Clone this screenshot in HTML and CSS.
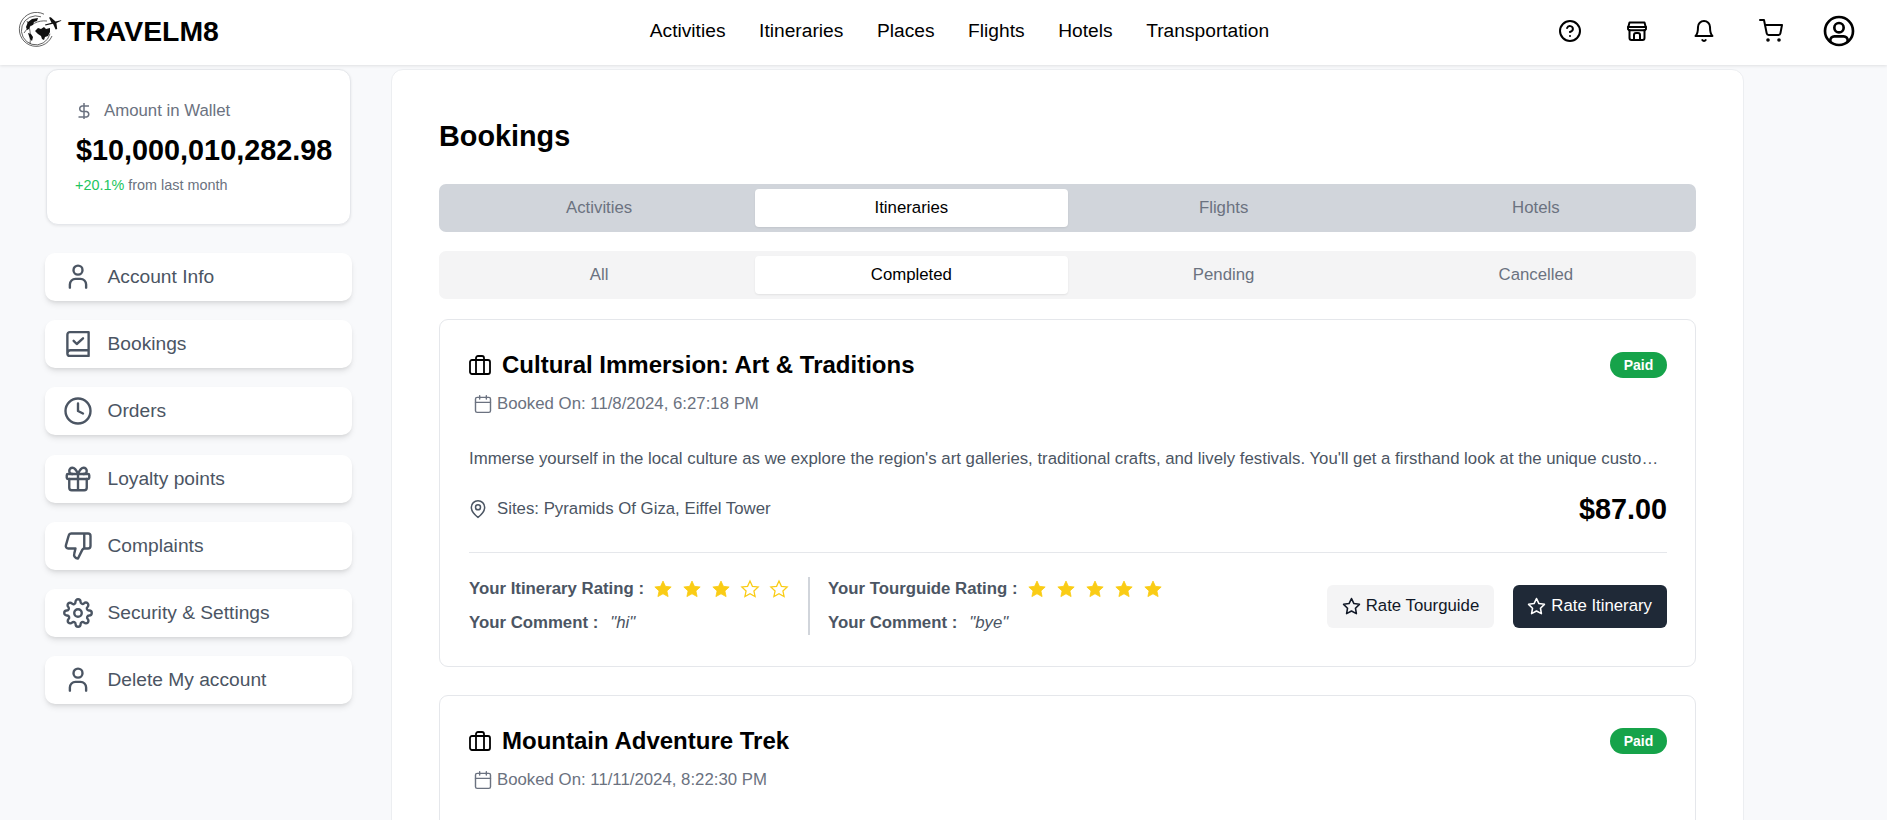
FILE: index.html
```html
<!DOCTYPE html>
<html lang="en">
<head>
    <meta charset="UTF-8">
    <meta name="viewport" content="width=device-width, initial-scale=1.0">
    <title>Bookings</title>
    <link rel="stylesheet" href="styles.css">
</head>
<body>
    <svg class="sprites" width="0" height="0">
        <symbol id="star" viewBox="0 0 24 24"><path d="M12 2.500l2.900 6.300 6.900.8-5.100 4.700 1.400 6.800-6.100-3.400-6.100 3.400 1.400-6.800-5.100-4.700 6.900-.8z"/></symbol>
        <symbol id="star-line" viewBox="0 0 24 24"><path d="M12 2l3.090 6.260L22 9.270l-5 4.870 1.180 6.880L12 17.770l-6.180 3.250L7 14.140 2 9.270l6.910-1.010z"/></symbol>
        <symbol id="user" viewBox="0 0 24 24"><circle cx="12" cy="6.500" r="3.600"/><path d="M5.500 20.500v-2.500a4.500 4.500 0 0 1 4.500-4.500h4a4.500 4.500 0 0 1 4.500 4.500v2.500"/></symbol>
        <symbol id="case" viewBox="0 0 24 24"><rect x="2" y="7" width="20" height="14" rx="2"/><path d="M8 21V5a2 2 0 0 1 2-2h4a2 2 0 0 1 2 2v16"/></symbol>
        <symbol id="calendar" viewBox="0 0 24 24"><rect x="3" y="4" width="18" height="18" rx="2"/><path d="M8 2v4M16 2v4M3 10h18"/></symbol>
    </svg>

    <header class="topbar">
        <a class="brand">
            <svg class="brand-logo" viewBox="0 0 44 38">
                <path class="logo-ring" d="M26 2.200A17 17 0 1 0 34 24"/>
                <path class="logo-ring" d="M23 4.800a14.500 14.500 0 1 0 9 17"/>
                <path class="logo-arc" d="M6 21C12 12 20 8 29 9M9 9c3 6 4 14 3 23"/>
                <path class="logo-land" d="M8 15l2-5 4-3 6-1-1 3-3 1-1 3-3 1-1 3-2 1zM17 19l3-3 3 1 3-2 2 2 4-1 0 4-2 4-3 1-1 3-2-1-1-3-3-2zM10 21l3 1 2 3-1 4-2-2z"/>
                <path class="logo-plane" d="M27 12.500l6.500-1.800L31 5.500l1.800-.3 4.700 4.400 5.500-1.400.4.6-5 2.200 .8 6-1.600.4-2.600-5.700-7.600 1.800z"/>
            </svg>
            <span class="brand-name">TRAVELM8</span>
        </a>
        <nav class="topnav">
            <a>Activities</a>
            <a>Itineraries</a>
            <a>Places</a>
            <a>Flights</a>
            <a>Hotels</a>
            <a>Transportation</a>
        </nav>
        <div class="topicons">
            <svg class="topicon" viewBox="0 0 24 24"><circle cx="12" cy="12" r="10"/><path d="M9.100 9a3 3 0 0 1 5.800 1c0 2-3 3-3 3M12 17h.01"/></svg>
            <svg class="topicon" viewBox="0 0 24 24"><path d="M3 9l1.500-5.500h15L21 9a2 2 0 0 1-1 2.200H4A2 2 0 0 1 3 9z"/><path d="M4.500 11v8a2 2 0 0 0 2 2h11a2 2 0 0 0 2-2v-8"/><path d="M9 21v-5a2 2 0 0 1 2-2h2a2 2 0 0 1 2 2v5"/><path d="M3 8h18"/></svg>
            <svg class="topicon" viewBox="0 0 24 24"><path d="M6 8a6 6 0 0 1 12 0c0 7 2.500 9 2.500 9h-17S6 15 6 8z"/><path d="M10.300 21a2 2 0 0 0 3.400 0"/></svg>
            <svg class="topicon" viewBox="0 0 24 24"><circle cx="9" cy="21" r=".8"/><circle cx="20" cy="21" r=".8"/><path d="M1 1h4l2.700 13.400a2 2 0 0 0 2 1.600h9.700a2 2 0 0 0 2-1.600L23 6H6"/></svg>
            <svg class="topicon topicon-large" viewBox="0 0 24 24"><circle cx="12" cy="12" r="10.500"/><circle cx="12" cy="9.500" r="3.500"/><path d="M5.500 19.800V19a3 3 0 0 1 3-3h7a3 3 0 0 1 3 3v.8"/></svg>
        </div>
    </header>

    <div class="layout">
        <aside class="sidebar">
            <div class="wallet">
                <div class="wallet-label">
                    <svg class="wallet-icon" viewBox="0 0 24 24"><path d="M12 4v16M17 7H10a2.800 2.800 0 0 0 0 5.500h4.500a2.800 2.800 0 0 1 0 5.500H6.500"/></svg>
                    <span>Amount in Wallet</span>
                </div>
                <div class="wallet-amount">$10,000,010,282.98</div>
                <div class="wallet-note"><span class="wallet-up">+20.1%</span> from last month</div>
            </div>
            <ul class="side-menu">
                <li><svg class="side-icon"><use href="#user"/></svg>Account Info</li>
                <li><svg class="side-icon" viewBox="0 0 24 24"><path d="M3.500 19.500V4.500a2 2 0 0 1 2-2h15v19h-15a2 2 0 0 1-2-2zM3.500 19.500a2.500 2.500 0 0 1 2.500-2.500h14.500"/><path d="M8.500 9.500l2.500 2.500 5-4.500"/></svg>Bookings</li>
                <li><svg class="side-icon" viewBox="0 0 24 24"><circle cx="12" cy="12" r="10"/><path d="M12 6v6l4 2"/></svg>Orders</li>
                <li><svg class="side-icon" viewBox="0 0 24 24"><rect x="3" y="8" width="18" height="4" rx="1"/><path d="M12 8v13M19 12v7a2 2 0 0 1-2 2H7a2 2 0 0 1-2-2v-7"/><path d="M7.500 8a2.500 2.500 0 0 1 0-5C10 3 12 8 12 8s2-5 4.500-5a2.500 2.500 0 0 1 0 5"/></svg>Loyalty points</li>
                <li><svg class="side-icon" viewBox="0 0 24 24"><path d="M17 14V2M9 18.100L10 14H4.200a2 2 0 0 1-1.900-2.500l2.300-8A2 2 0 0 1 6.500 2H20a2 2 0 0 1 2 2v8a2 2 0 0 1-2 2h-2.800a2 2 0 0 0-1.800 1.100L12 22a3 3 0 0 1-3-3.900z"/></svg>Complaints</li>
                <li><svg class="side-icon" viewBox="0 0 24 24"><circle cx="12" cy="12" r="3"/><path d="M19.400 15a1.650 1.650 0 0 0 .33 1.820l.06.06a2 2 0 1 1-2.830 2.830l-.06-.06a1.650 1.650 0 0 0-2.820 1.170V21a2 2 0 0 1-4 0v-.09A1.650 1.650 0 0 0 7.260 19.700l-.06.06a2 2 0 1 1-2.830-2.830l.06-.06A1.650 1.650 0 0 0 3.260 14H3a2 2 0 0 1 0-4h.09A1.650 1.650 0 0 0 4.300 7.260l-.06-.06a2 2 0 1 1 2.830-2.830l.06.06A1.650 1.650 0 0 0 10 3.260V3a2 2 0 0 1 4 0v.09a1.650 1.650 0 0 0 2.800 1.170l.06-.06a2 2 0 1 1 2.830 2.830l-.06.06A1.650 1.650 0 0 0 20.740 10H21a2 2 0 0 1 0 4h-.09a1.650 1.650 0 0 0-1.510 1z"/></svg>Security &amp; Settings</li>
                <li><svg class="side-icon"><use href="#user"/></svg>Delete My account</li>
            </ul>
        </aside>

        <main class="content">
            <h1 class="page-title">Bookings</h1>

            <div class="tabs tabs-main">
                <div class="tab">Activities</div>
                <div class="tab tab-active">Itineraries</div>
                <div class="tab">Flights</div>
                <div class="tab">Hotels</div>
            </div>
            <div class="tabs tabs-sub">
                <div class="tab">All</div>
                <div class="tab tab-active">Completed</div>
                <div class="tab">Pending</div>
                <div class="tab">Cancelled</div>
            </div>

            <article class="booking">
                <div class="booking-head">
                    <h2 class="booking-title"><svg class="case-icon"><use href="#case"/></svg>Cultural Immersion: Art &amp; Traditions</h2>
                    <span class="badge">Paid</span>
                </div>
                <div class="booked-on"><svg class="cal-icon"><use href="#calendar"/></svg>Booked On: 11/8/2024, 6:27:18 PM</div>
                <p class="booking-desc">Immerse yourself in the local culture as we explore the region's art galleries, traditional crafts, and lively festivals. You'll get a firsthand look at the unique customs and traditions that make this place so special.</p>
                <div class="booking-info">
                    <div class="sites">
                        <svg class="pin-icon" viewBox="0 0 24 24"><path d="M20 10c0 6-8 12-8 12s-8-6-8-12a8 8 0 0 1 16 0z"/><circle cx="12" cy="10" r="3"/></svg>
                        Sites: Pyramids Of Giza, Eiffel Tower
                    </div>
                    <div class="price">$87.00</div>
                </div>
                <div class="booking-foot">
                    <div class="rating-col">
                        <div class="rating-row">
                            <span class="rating-label">Your Itinerary Rating :</span>
                            <span class="stars">
                                <svg class="star"><use href="#star"/></svg>
                                <svg class="star"><use href="#star"/></svg>
                                <svg class="star"><use href="#star"/></svg>
                                <svg class="star star-empty"><use href="#star"/></svg>
                                <svg class="star star-empty"><use href="#star"/></svg>
                            </span>
                        </div>
                        <div class="rating-row">
                            <span class="rating-label">Your Comment :</span>
                            <em class="comment">"hi"</em>
                        </div>
                    </div>
                    <div class="rating-col rating-col-guide">
                        <div class="rating-row">
                            <span class="rating-label">Your Tourguide Rating :</span>
                            <span class="stars">
                                <svg class="star"><use href="#star"/></svg>
                                <svg class="star"><use href="#star"/></svg>
                                <svg class="star"><use href="#star"/></svg>
                                <svg class="star"><use href="#star"/></svg>
                                <svg class="star"><use href="#star"/></svg>
                            </span>
                        </div>
                        <div class="rating-row">
                            <span class="rating-label">Your Comment :</span>
                            <em class="comment">"bye"</em>
                        </div>
                    </div>
                    <div class="booking-actions">
                        <button class="btn btn-light"><svg class="btn-star"><use href="#star-line"/></svg>Rate Tourguide</button>
                        <button class="btn btn-dark"><svg class="btn-star"><use href="#star-line"/></svg>Rate Itinerary</button>
                    </div>
                </div>
            </article>

            <article class="booking">
                <div class="booking-head">
                    <h2 class="booking-title"><svg class="case-icon"><use href="#case"/></svg>Mountain Adventure Trek</h2>
                    <span class="badge">Paid</span>
                </div>
                <div class="booked-on"><svg class="cal-icon"><use href="#calendar"/></svg>Booked On: 11/11/2024, 8:22:30 PM</div>
            </article>
        </main>
    </div>
</body>
</html>
```

FILE: styles.css
```css
* {
    box-sizing: border-box;
}

html, body {
    height: 820px;
    overflow: hidden;
}

body {
    margin: 0;
    font-family: 'Liberation Sans', Arial, sans-serif;
    background-color: #f8f9fb;
    color: #000;
}

.sprites {
    position: absolute;
}

/* top bar */
.topbar {
    display: flex;
    align-items: center;
    justify-content: space-between;
    height: 65px;
    padding: 0 32px 3px 18px;
    background-color: #fff;
    box-shadow: 0 1px 3px rgba(0, 0, 0, 0.1);
    position: relative;
}

.brand {
    display: flex;
    align-items: center;
    gap: 6px;
    width: 400px;
}

.brand-logo {
    width: 44px;
    height: 38px;
}

.logo-ring,
.logo-arc {
    fill: none;
    stroke: #222;
    stroke-width: 0.7;
}

.logo-land,
.logo-plane {
    fill: #111;
}

.brand-name {
    font-size: 28.4px;
    font-weight: 700;
}

.topnav {
    display: flex;
    gap: 33.6px;
    font-size: 19.2px;
    margin-left: 46px;
}

.topicons {
    display: flex;
    align-items: center;
    gap: 43px;
    width: 400px;
    justify-content: flex-end;
}

.topicon {
    width: 24px;
    height: 24px;
    fill: none;
    stroke: #000;
    stroke-width: 2;
    stroke-linecap: round;
    stroke-linejoin: round;
}

.topicon-large {
    width: 32px;
    height: 32px;
    margin-left: -3px;
}

/* page */
.layout {
    display: flex;
    align-items: flex-start;
    padding: 4px 143px 0 45px;
    gap: 39px;
}

.sidebar {
    width: 307px;
    flex-shrink: 0;
}

.wallet {
    width: 305px;
    height: 156px;
    margin-left: 1px;
    padding: 29px;
    background-color: #fff;
    border: 1px solid #e5e7eb;
    border-radius: 12px;
    box-shadow: 0 1px 3px rgba(0, 0, 0, 0.08);
}

.wallet-label {
    display: flex;
    align-items: center;
    gap: 8px;
    font-size: 16.8px;
    color: #6b7280;
}

.wallet-icon {
    width: 24px;
    height: 24px;
    margin-left: -4px;
    fill: none;
    stroke: #6b7280;
    stroke-width: 1.5;
}

.wallet-amount {
    margin-top: 11px;
    font-size: 28.8px;
    font-weight: 700;
}

.wallet-note {
    margin: 10px 0 0 -1px;
    font-size: 14.4px;
    color: #6b7280;
}

.wallet-up {
    color: #22c55e;
}

.side-menu {
    list-style: none;
    margin: 28px 0 0;
    padding: 0;
    display: flex;
    flex-direction: column;
    gap: 19.2px;
}

.side-menu li {
    display: flex;
    align-items: center;
    gap: 14.5px;
    height: 48px;
    padding-left: 18px;
    font-size: 19.2px;
    color: #4b5563;
    background-color: #fff;
    border-radius: 10px;
    box-shadow: 0 4px 6px -1px rgba(0, 0, 0, 0.1), 0 2px 4px -2px rgba(0, 0, 0, 0.1);
}

.side-icon {
    width: 30px;
    height: 30px;
    fill: none;
    stroke: #4b5563;
    stroke-width: 1.9;
    stroke-linecap: round;
    stroke-linejoin: round;
}

/* main card */
.content {
    width: 1353px;
    height: 900px;
    padding: 47px;
    background-color: #fff;
    border: 1px solid #eceef1;
    border-radius: 12px;
}

.page-title {
    margin: 0 0 29px;
    font-size: 28.8px;
    line-height: 38px;
    font-weight: 700;
}

.tabs {
    display: grid;
    grid-template-columns: repeat(4, 1fr);
    padding: 5px 4px;
    border-radius: 7px;
    font-size: 16.8px;
    color: #6b7280;
    text-align: center;
}

.tabs-main {
    background-color: #d1d5db;
    margin-bottom: 19px;
}

.tabs-sub {
    background-color: #f4f4f5;
    margin-bottom: 20px;
}

.tab {
    padding: 10px 0;
    line-height: 18px;
    border-radius: 4px;
}

.tab-active {
    background-color: #fff;
    color: #000;
    box-shadow: 0 1px 2px rgba(0, 0, 0, 0.08);
}

/* booking cards */
.booking {
    padding: 27px 28px 27px 29px;
    margin-bottom: 28px;
    height: 348px;
    background-color: #fff;
    border: 1px solid #e5e7eb;
    border-radius: 9px;
}

.booking-head {
    display: flex;
    align-items: center;
    justify-content: space-between;
    height: 36px;
}

.booking-title {
    display: flex;
    align-items: center;
    gap: 10px;
    margin: 0;
    font-size: 24px;
    font-weight: 700;
}

.case-icon {
    width: 24px;
    height: 24px;
    margin-left: -1px;
    fill: none;
    stroke: #000;
    stroke-width: 1.8;
    stroke-linecap: round;
    stroke-linejoin: round;
}

.badge {
    width: 57px;
    height: 26px;
    line-height: 26px;
    text-align: center;
    font-size: 14px;
    font-weight: 700;
    color: #fff;
    background-color: #16a34a;
    border-radius: 13px;
}

.booked-on {
    display: flex;
    align-items: center;
    gap: 4px;
    margin-top: 11px;
    padding-left: 4px;
    height: 20px;
    font-size: 16.8px;
    color: #6b7280;
}

.cal-icon {
    width: 20px;
    height: 20px;
    fill: none;
    stroke: #6b7280;
    stroke-width: 1.7;
    stroke-linecap: round;
}

.booking-desc {
    margin: 35px 0 0;
    font-size: 16.8px;
    line-height: 20px;
    color: #4b5563;
    white-space: nowrap;
    overflow: hidden;
    text-overflow: ellipsis;
}

.booking-info {
    display: flex;
    align-items: center;
    justify-content: space-between;
    margin-top: 23px;
    height: 34px;
}

.sites {
    display: flex;
    align-items: center;
    gap: 9px;
    font-size: 16.8px;
    color: #4b5563;
}

.pin-icon {
    width: 20px;
    height: 20px;
    margin-left: -1px;
    fill: none;
    stroke: #4b5563;
    stroke-width: 1.8;
}

.price {
    font-size: 28.8px;
    font-weight: 700;
}

.booking-foot {
    display: flex;
    align-items: center;
    margin-top: 26px;
    padding-top: 24px;
    border-top: 1px solid #e5e7eb;
}

.rating-col {
    display: flex;
    flex-direction: column;
    gap: 10px;
    padding-right: 19px;
    font-size: 16.8px;
    color: #4b5563;
}

.rating-col-guide {
    padding-left: 18px;
    border-left: 2px solid #d1d5db;
}

.rating-row {
    display: flex;
    align-items: center;
    height: 24px;
}

.rating-label {
    font-weight: 700;
}

.comment {
    margin-left: 12px;
}

.stars {
    display: flex;
    gap: 9px;
    margin-left: 9px;
}

.star {
    width: 20px;
    height: 20px;
    fill: #facc15;
    stroke: #facc15;
    stroke-width: 1;
}

.star-empty {
    fill: none;
    stroke-width: 1.5;
}

.booking-actions {
    display: flex;
    gap: 19px;
    margin-left: auto;
}

.btn {
    display: flex;
    align-items: center;
    gap: 5px;
    height: 43px;
    padding: 0 15px;
    font-family: inherit;
    font-size: 16.8px;
    border: none;
    border-radius: 6px;
}

.btn-star {
    width: 19px;
    height: 19px;
    fill: none;
    stroke: currentColor;
    stroke-width: 2;
    stroke-linejoin: round;
}

.btn-light {
    background-color: #f4f4f5;
    color: #111827;
}

.btn-dark {
    padding-left: 14px;
    background-color: #1f2937;
    color: #fff;
}
```
